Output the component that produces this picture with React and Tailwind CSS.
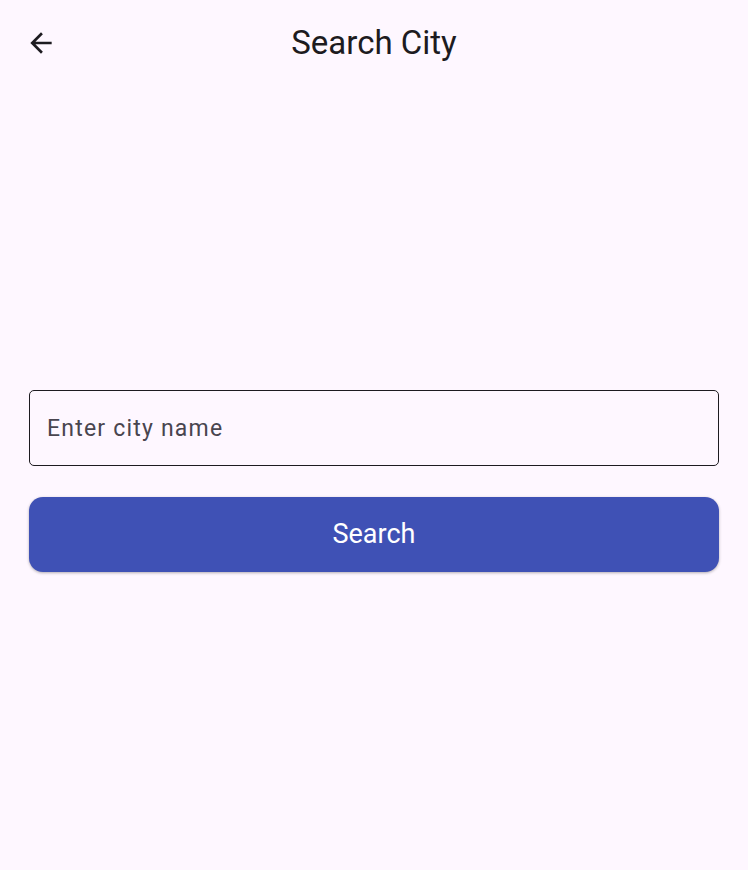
import React, { useState } from 'react';

const App = () => {
  const [city, setCity] = useState('');

  return (
    <div className="h-[870px] w-full bg-[#fef7ff] flex flex-col" style={{ fontFamily: 'Roboto, "Noto Sans", sans-serif' }}>
      {/* App bar */}
      <header className="relative h-[86px] flex items-center justify-center shrink-0">
        <button className="absolute left-[19px] top-[21px] w-[44px] h-[44px] flex items-center justify-center text-[#1d1b20]">
          <svg width="32" height="32" viewBox="0 0 24 24" fill="currentColor">
            <path d="M20 11H7.83l5.59-5.59L12 4l-8 8 8 8 1.41-1.41L7.83 13H20v-2z" />
          </svg>
        </button>
        <h1 className="text-[33px] leading-none text-[#1d1b20] font-normal mt-[-2px]">Search City</h1>
      </header>

      {/* Body */}
      <main className="flex-1 flex flex-col justify-center px-[29px] pt-[6px]">
        <input
          type="text"
          value={city}
          onChange={(e) => setCity(e.target.value)}
          placeholder="Enter city name"
          className="h-[76px] w-full rounded-[5px] border border-[#1d1b20] bg-transparent px-[17px] text-[23px] tracking-[1.2px] text-[#1d1b20] placeholder:text-[#49454f] outline-none"
        />
        <button className="mt-[31px] h-[75px] w-full rounded-[14px] bg-[#3f51b5] text-white text-[27px] shadow-[0_1px_3px_rgba(0,0,0,0.3)]">
          Search
        </button>
      </main>
    </div>
  );
};

export default App;
